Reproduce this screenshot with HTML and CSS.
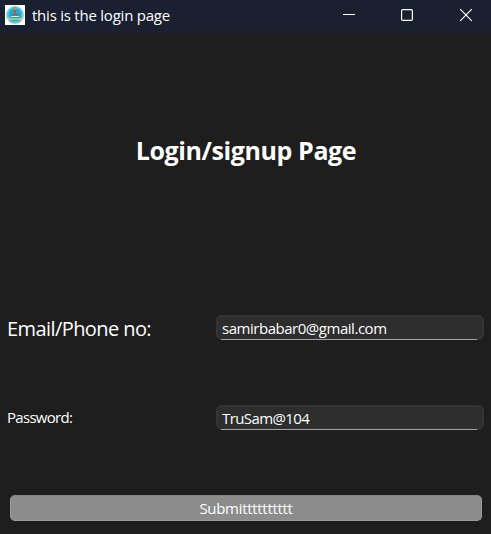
FILE: index.html
```
<!DOCTYPE html>
<html lang="en">
<head>
<meta charset="utf-8">
<title>this is the login page</title>
<link rel="stylesheet" href="styles.css">
</head>
<body>
<div class="window">
  <header class="titlebar">
    <svg class="app-icon" width="20" height="20" viewBox="0 0 20 20" aria-hidden="true">
      <rect width="20" height="20" fill="#fff"/>
      <circle cx="10" cy="10" r="8.7" fill="#62c7e0"/>
      <circle cx="10" cy="9.500" r="6.300" fill="#20abd5"/>
      <path d="M9 5h2v4l3 2H6l3-2z" fill="#7e6f82"/>
      <path d="M9 2.500L10 1l1 1.500v3H9z" fill="#ef8b20"/>
      <path d="M9 5h2v2H9zM7.500 9h5v1h-5z" fill="#c44b37"/>
      <path d="M6 11h8v1H6z" fill="#d9ecc0"/>
      <path d="M1 12.500l4 1h10l4-1v1.200l-4 1H5l-4-1z" fill="#ead36b"/>
      <path d="M6 15h8v1H6z" fill="#3b9fb9"/>
    </svg>
    <span class="caption">this is the login page</span>
    <svg class="controls" width="171" height="33" viewBox="0 0 171 33" fill="none" stroke="#fff" aria-hidden="true">
      <path d="M23 14.500h12"/>
      <rect x="81.600" y="9.600" width="10.800" height="10.800" rx="1.200" stroke-width="1.200"/>
      <path d="M140.200 9.200l11.600 11.600M151.800 9.200l-11.600 11.600" stroke-width="1.150"/>
    </svg>
  </header>
  <main class="content">
    <h1 class="heading">Login/signup Page</h1>
    <label class="label label-large" for="email">Email/Phone no:</label>
    <div class="field"><input class="input input-email" id="email" type="text" value="samirbabar0@gmail.com"></div>
    <label class="label" for="password">Password:</label>
    <div class="field"><input class="input input-password" id="password" type="text" value="TruSam@104"></div>
    <button class="submit" type="button">Submitttttttttt</button>
  </main>
</div>
</body>
</html>
```
FILE: styles.css
```
* { box-sizing: border-box; }
body {
  margin: 0;
  background: #1e1e1e;
  color: #fff;
  font-family: "Open Sans", "Noto Sans", sans-serif;
  font-size: 15px;
}
.window {
  height: 534px;
  display: flex;
  flex-direction: column;
  overflow: hidden;
}
.titlebar {
  height: 33px;
  flex: none;
  display: flex;
  align-items: center;
  padding-left: 5px;
  background: #1a202f;
}
.app-icon { margin-top: -3px; }
.caption {
  margin: -4px 0 0 7px;
  line-height: 20px;
  white-space: nowrap;
  letter-spacing: -0.23px;
}
.controls { margin-left: auto; }
.content {
  flex: 1;
  display: grid;
  grid-template-columns: 209px 268px;
  grid-template-rows: 234px 120px 60px 87px;
  padding-left: 7px;
  align-items: center;
}
.heading {
  grid-column: 1 / -1;
  margin: 0;
  padding: 0 0 1px 1px;
  text-align: center;
  font-size: 25px;
  line-height: 34px;
  font-weight: 700;
  letter-spacing: -0.4px;
}
.label { letter-spacing: -0.7px; }
.label-large {
  padding-top: 2px;
  font-size: 20px;
  letter-spacing: -0.58px;
}
.field { height: 25px; position: relative; }
.field::after {
  content: "";
  position: absolute;
  left: 5px;
  right: 7px;
  bottom: 0;
  height: 1px;
  background: #a0a0a0;
}
.input {
  display: block;
  width: 268px;
  height: 25px;
  padding: 2px 4px 0;
  border: 2px solid #343434;
  border-radius: 6px;
  outline: none;
  background: #2d2d2d;
  color: #fff;
  font: inherit;
  line-height: 19px;
}
.input-email { letter-spacing: -0.47px; }
.input-password { letter-spacing: -0.6px; }
.submit {
  grid-column: 1 / -1;
  align-self: end;
  width: 472px;
  height: 26px;
  margin: 0 0 13px 3px;
  padding: 0;
  border: 1px solid #9b9b9b;
  border-top-color: #858585;
  border-radius: 5px;
  background: #8c8c8c;
  color: #fff;
  font: inherit;
  letter-spacing: -0.3px;
}
```
